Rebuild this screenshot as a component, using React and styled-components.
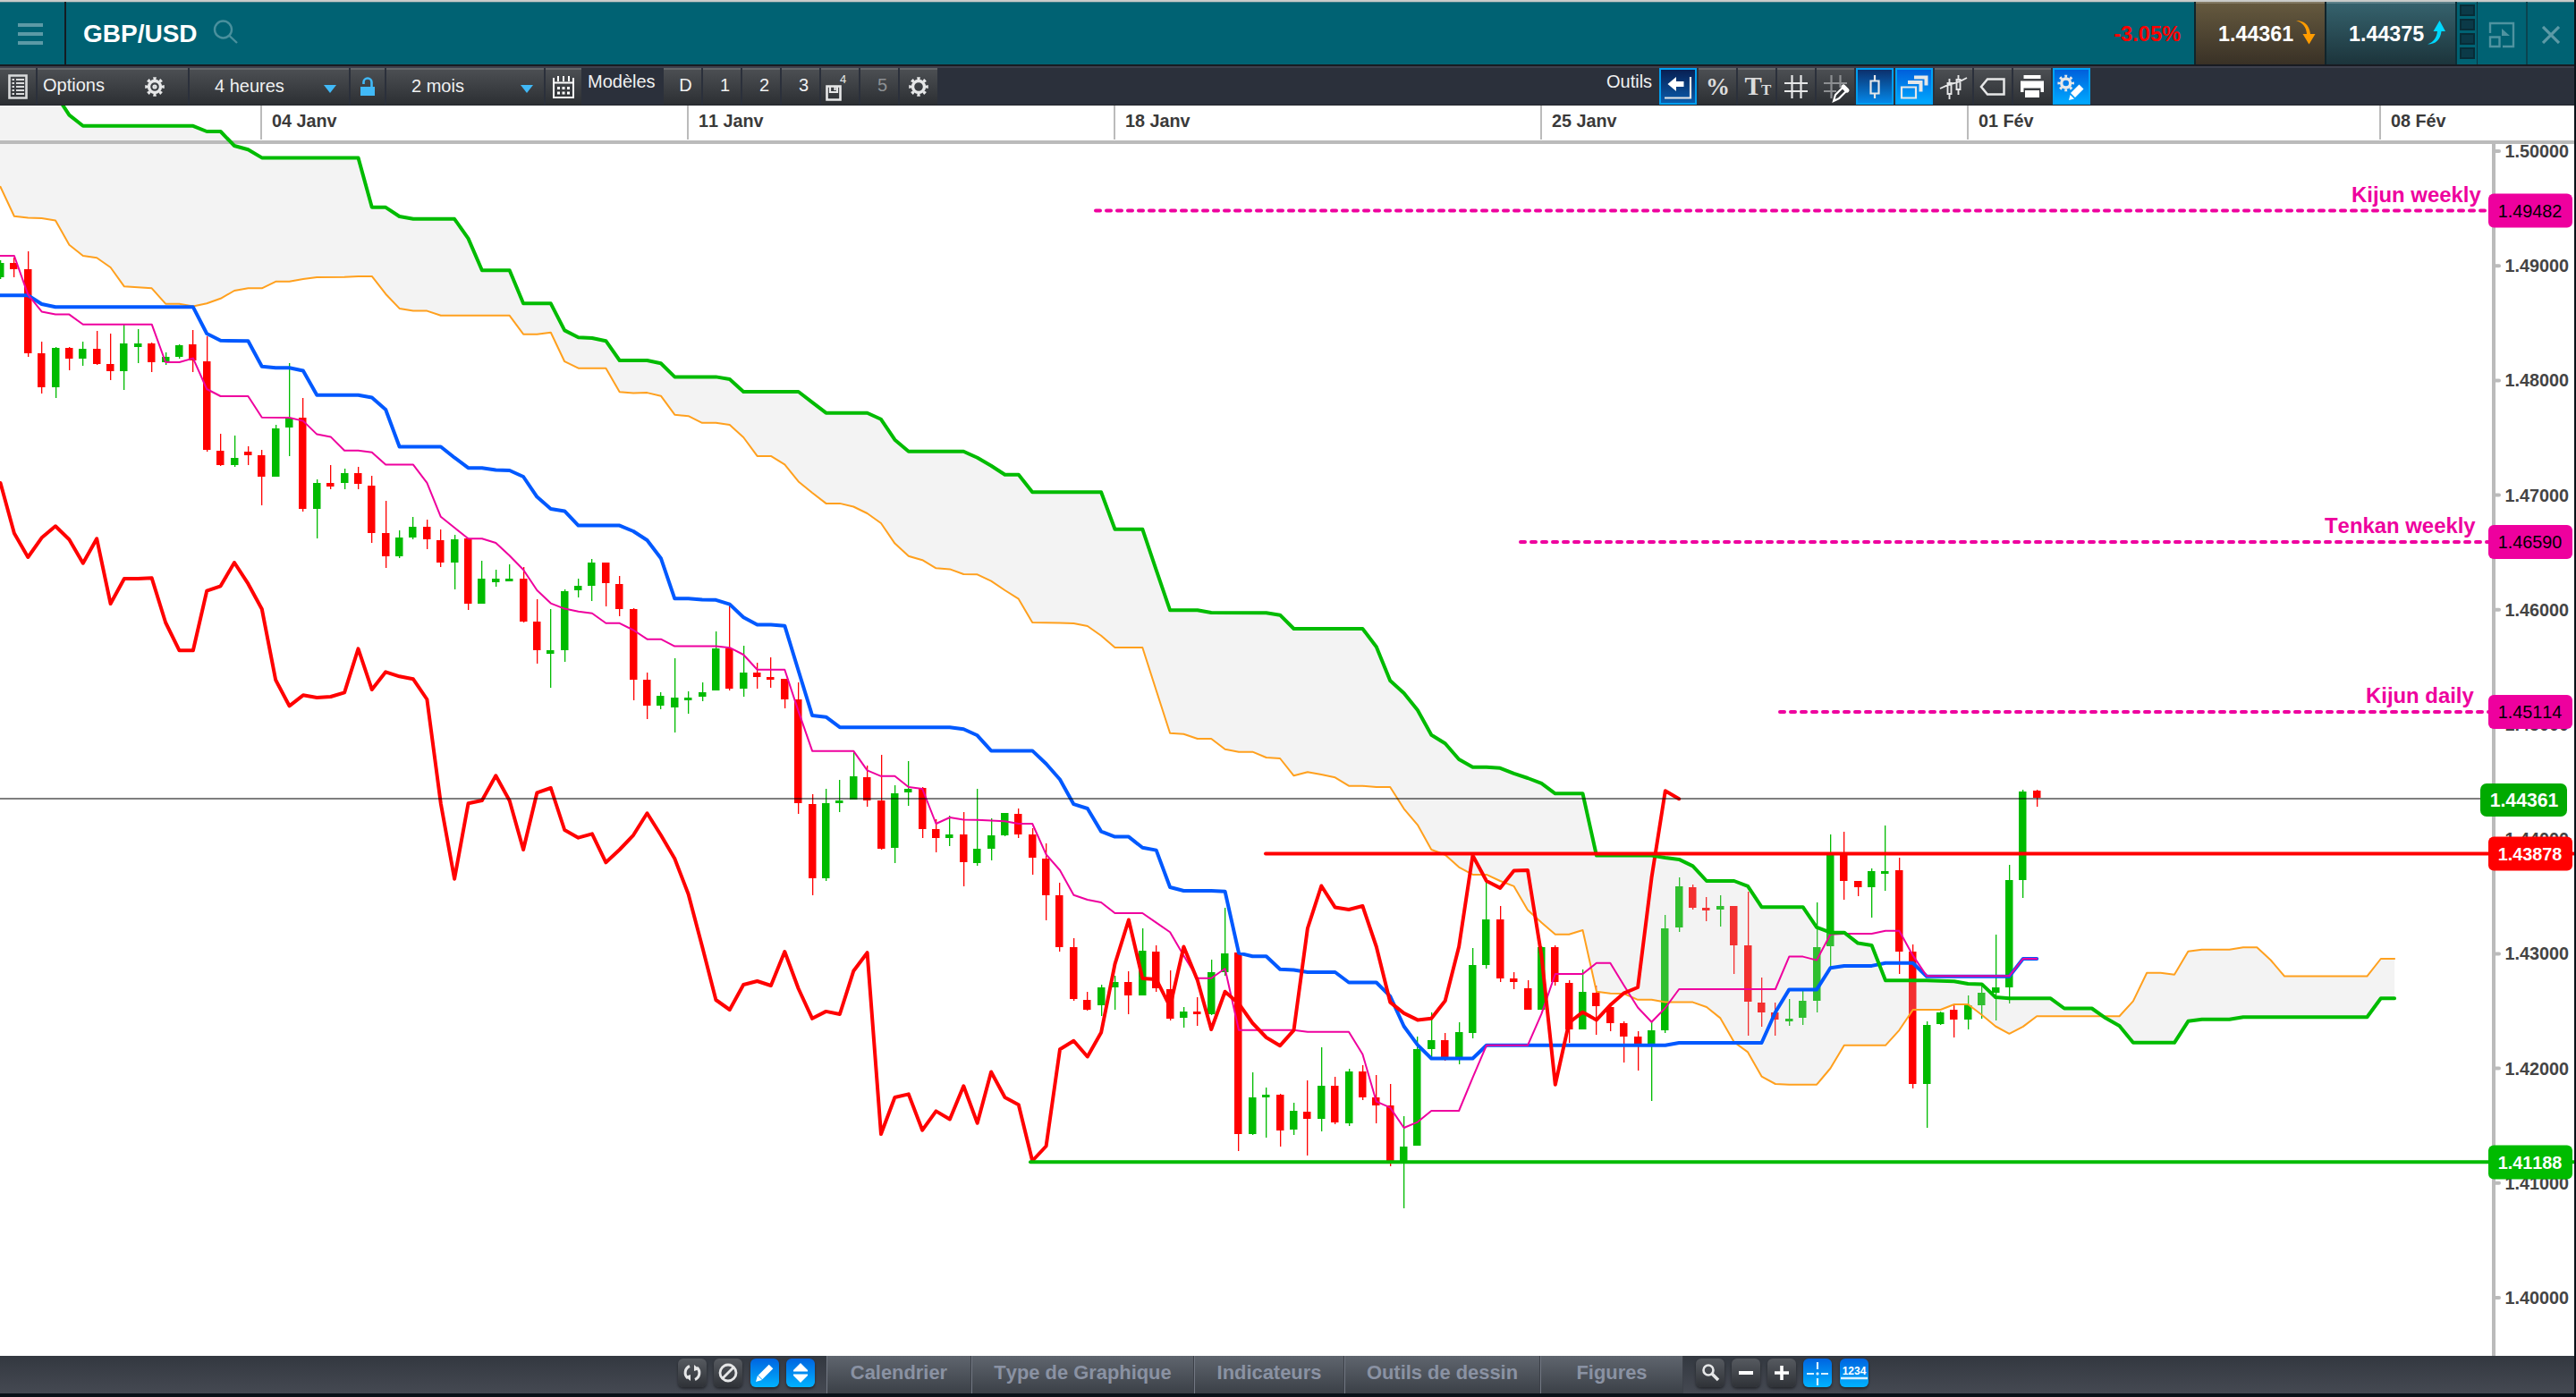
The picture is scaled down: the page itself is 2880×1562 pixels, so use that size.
import React from 'react'
import styled, { createGlobalStyle, css } from 'styled-components'

const GlobalStyle = createGlobalStyle`
  * {
    box-sizing: border-box;
  }

  body {
    margin: 0;
    background: #0a1118;
    font-family: 'Liberation Sans', Arial, sans-serif;
    font-kerning: none;
  }
`

const Window = styled.div`
  display: flex;
  flex-direction: column;
  width: 2878px;
  height: 1562px;
  overflow: hidden;
`

/* ---------- title bar ---------- */

const TitleBar = styled.header`
  display: flex;
  height: 72px;
  flex: none;
  color: #fff;
  background: #006273;
  border-top: 2px solid #c9cbc9;
  box-shadow: inset 0 1px 0 #3c7d88;
`

const MenuButton = styled.div`
  width: 74px;
  padding: 24px 0 0 20px;
  border-right: 2px solid #141c22;

  svg {
    display: block;
  }
`

const Symbol = styled.h1`
  margin: 0 17px 0 19px;
  font-size: 28px;
  font-weight: 700;
  line-height: 72px;
`

const SearchIcon = styled.svg`
  margin-top: 20px;
`

const Change = styled.div`
  margin-left: auto;
  margin-right: 15px;
  color: #f00;
  font-size: 23.6px;
  font-weight: 700;
  line-height: 72px;
`

const Quote = styled.div`
  display: flex;
  width: 146px;
  padding-left: 25px;
  font-size: 23.3px;
  font-weight: 700;
  line-height: 73px;
  background: ${({ $buy }) =>
    $buy ? 'linear-gradient(#36636e, #1c343b)' : 'linear-gradient(#665a3f, #393126)'};
  border-left: 2px solid #10242b;
  box-shadow: inset 0 2px 0 rgba(255, 255, 255, 0.2);

  svg {
    flex: none;
    margin: 20px 0 0 3px;
  }
`

const Meter = styled.div`
  display: flex;
  flex-direction: column;
  gap: 3px;
  width: 25px;
  padding: 3px 2px 0 3px;
  border-left: 2px solid #0b2f38;
  border-right: 1px solid #0b3540;
`

const MeterCell = styled.span`
  height: 13px;
  background: #0b3a48;
  border: 2px solid #082c37;
`

const WindowButton = styled.div`
  display: flex;
  align-items: center;
  justify-content: center;
  width: 54px;
  padding-top: 4px;
  border-left: ${({ $divided }) => ($divided ? '2px solid #0b4450' : '0')};
`

/* ---------- tool bar ---------- */

const ToolBar = styled.nav`
  display: flex;
  gap: 2px;
  height: 46px;
  flex: none;
  padding-top: 2px;
  background: #2b303b;
  border-top: 2px solid #181b22;
  border-bottom: 1px solid #23262c;
  box-shadow: inset 0 2px 0 #3d404c;
`

const toneStyles = {
  plain: css`
    background: linear-gradient(#4d5054, #2c2f33);
    box-shadow: inset 0 2px 0 #64676a;
  `,
  deep: css`
    background: linear-gradient(#081f52, #0a5cac);
    border: 2px solid #009ff0;
  `,
  mid: css`
    background: linear-gradient(#0c306c, #0487e8);
    border: 2px solid #009ff0;
  `,
  bright: css`
    background: linear-gradient(#005fdb, #00a8ff);
    border: 2px solid #00a2f4;
  `
}

const Tool = styled.div`
  display: flex;
  flex: none;
  align-items: center;
  justify-content: center;
  width: ${({ $width }) => $width || 42}px;
  color: ${({ $dim }) => ($dim ? '#8d9094' : '#f0f1f2')};
  font-size: 20px;
  ${({ $tone }) => toneStyles[$tone || 'plain']}

  svg {
    flex: none;
  }
`

const WideTool = styled(Tool)`
  justify-content: space-between;
  padding: ${({ $pad }) => $pad};
`

const PresetTool = styled(Tool)`
  padding: 0 0 3px 7px;
`

const ToolLabel = styled.span`
  width: ${({ $width }) => $width}px;
  padding: 4px 0 0 5px;
  margin-left: ${({ $push }) => $push || 0}px;
  color: #f0f1f2;
  font-size: 20px;
  line-height: 23px;
`

const Caret = styled.span`
  margin-top: 5px;
  border: 7px solid transparent;
  border-top: 9px solid #41b9f7;
  border-bottom: 0;
`

/* ---------- bottom bar ---------- */

const BottomBar = styled.footer`
  display: flex;
  height: 42px;
  flex: none;
  background: linear-gradient(#333840, #454952);
`

const IconGroup = styled.div`
  display: flex;
  gap: 8.3px;
  padding: 3px 0 0 ${({ $indent }) => $indent}px;
  width: ${({ $width }) => $width}px;
`

const RoundTool = styled.div`
  display: flex;
  flex: none;
  width: 32px;
  height: 32px;
  border-radius: 6px;
  box-shadow: 0 2px 3px rgba(0, 0, 0, 0.45);
  background: ${({ $on }) =>
    $on ? 'linear-gradient(#0064e0, #00b2ff)' : 'linear-gradient(#565a60, #2f3237)'};
`

const Tab = styled.div`
  flex: none;
  width: ${({ $width }) => $width}px;
  color: #8a92a3;
  font-size: 21.9px;
  font-weight: 700;
  line-height: 37px;
  text-align: center;
  background: linear-gradient(#5f656e, #3b4047);
  border-left: 1px solid #727883;
  border-right: 1px solid #3c4048;
`

const ChartArea = styled.main`
  height: 1398px;
  flex: none;
  background: #fff;

  svg {
    display: block;
  }
`

/* ---------- chart data ---------- */

const BAR_WIDTH = 15.383
const TICK = 0.3954

const UP = '#00bb00'
const DOWN = '#ff0000'
const PINK = '#ee009e'

// Bars are kept as tick offsets below the top of their block:
// direction, high, body top, body bottom, low
const blocks = [
  {
    from: 0,
    top: 110,
    bars: [
      ['u', 458, 465, 506, 512], ['d', 450, 465, 483, 507], ['d', 432, 483, 721, 731],
      ['d', 688, 722, 817, 834], ['u', 703, 706, 817, 848], ['d', 702, 706, 735, 768],
      ['u', 687, 708, 735, 755], ['d', 658, 708, 750, 754], ['d', 666, 752, 771, 797],
      ['u', 640, 693, 771, 824], ['u', 653, 694, 703, 748], ['d', 691, 693, 745, 775],
      ['u', 718, 731, 745, 754], ['u', 695, 697, 732, 737], ['d', 656, 696, 741, 775],
      ['d', 672, 743, 995, 999], ['d', 948, 997, 1038, 1040], ['u', 953, 1017, 1038, 1042],
      ['d', 984, 999, 1009, 1038], ['d', 993, 1009, 1069, 1150], ['u', 922, 933, 1069, 1069],
      ['u', 748, 903, 931, 1012], ['d', 846, 904, 1161, 1168], ['u', 1078, 1087, 1161, 1245],
      ['d', 1037, 1087, 1097, 1104], ['u', 1047, 1060, 1087, 1106], ['d', 1042, 1060, 1090, 1106],
      ['d', 1067, 1095, 1228, 1257], ['d', 1138, 1229, 1295, 1327], ['u', 1222, 1243, 1296, 1300],
      ['u', 1184, 1211, 1242, 1247], ['d', 1190, 1211, 1248, 1274], ['d', 1219, 1249, 1312, 1324],
      ['u', 1234, 1247, 1312, 1388], ['d', 1243, 1245, 1429, 1447], ['u', 1308, 1359, 1430, 1430],
      ['u', 1334, 1359, 1367, 1381], ['u', 1317, 1357, 1366, 1366], ['d', 1324, 1357, 1480, 1483]
    ]
  },
  {
    from: 39,
    top: 400,
    bars: [
      ['d', 682, 747, 827, 864], ['u', 710, 828, 836, 933], ['u', 655, 659, 827, 860],
      ['u', 624, 646, 657, 678], ['u', 570, 580, 646, 689], ['d', 580, 580, 637, 703],
      ['d', 617, 641, 710, 731], ['d', 708, 710, 910, 969], ['d', 889, 910, 984, 1021],
      ['u', 947, 955, 985, 993], ['u', 850, 962, 990, 1060], ['u', 944, 960, 969, 1007],
      ['u', 917, 947, 959, 972], ['u', 774, 823, 942, 942], ['d', 702, 823, 937, 942],
      ['u', 814, 890, 936, 959], ['d', 862, 890, 902, 936], ['d', 846, 902, 910, 934],
      ['d', 908, 909, 966, 991], ['d', 918, 966, 1260, 1290], ['d', 1234, 1262, 1472, 1520],
      ['u', 1220, 1260, 1471, 1480], ['u', 1193, 1252, 1260, 1286], ['u', 1115, 1184, 1250, 1250],
      ['d', 1154, 1186, 1251, 1270], ['d', 1122, 1252, 1389, 1391], ['u', 1209, 1231, 1387, 1430],
      ['u', 1140, 1218, 1229, 1266], ['d', 1214, 1216, 1334, 1359], ['d', 1304, 1334, 1357, 1399],
      ['u', 1296, 1348, 1357, 1381], ['d', 1285, 1349, 1427, 1495], ['u', 1218, 1389, 1430, 1436],
      ['u', 1302, 1351, 1389, 1421]
    ]
  },
  {
    from: 73,
    top: 760,
    bars: [
      ['u', 376, 378, 440, 442], ['d', 364, 379, 438, 448], ['d', 421, 438, 503, 552],
      ['d', 462, 505, 609, 680], ['d', 575, 610, 756, 770], ['d', 731, 756, 904, 909],
      ['d', 883, 905, 933, 936], ['u', 862, 870, 921, 952], ['u', 836, 856, 869, 932],
      ['d', 825, 856, 893, 946], ['u', 703, 767, 894, 894], ['d', 750, 768, 873, 882],
      ['d', 822, 875, 958, 964], ['u', 926, 938, 956, 984], ['d', 898, 938, 947, 980],
      ['u', 791, 826, 946, 949], ['u', 646, 773, 826, 837], ['d', 770, 772, 1285, 1333],
      ['u', 1110, 1181, 1285, 1287], ['u', 1154, 1173, 1182, 1296], ['d', 1170, 1173, 1274, 1320],
      ['u', 1196, 1220, 1273, 1287], ['d', 1132, 1221, 1243, 1345], ['u', 1040, 1149, 1243, 1276],
      ['d', 1123, 1148, 1252, 1258], ['u', 1099, 1109, 1254, 1261], ['d', 1090, 1109, 1180, 1188],
      ['d', 1119, 1181, 1203, 1255], ['d', 1143, 1203, 1361, 1376], ['u', 1233, 1319, 1364, 1495],
      ['u', 1010, 1045, 1318, 1318], ['u', 942, 1020, 1044, 1070], ['d', 1000, 1020, 1068, 1077],
      ['u', 968, 997, 1068, 1087], ['u', 758, 808, 1000, 1014], ['u', 575, 678, 807, 817],
      ['d', 640, 679, 844, 855], ['d', 826, 845, 854, 874], ['d', 851, 872, 932, 932],
      ['u', 753, 755, 932, 932], ['d', 750, 755, 856, 866], ['d', 850, 857, 989, 1027],
      ['u', 820, 883, 990, 990], ['d', 865, 885, 924, 1005], ['d', 915, 926, 971, 994],
      ['d', 966, 972, 1010, 1082], ['d', 994, 1009, 1033, 1104], ['u', 968, 991, 1030, 1190],
      ['u', 665, 702, 991, 999], ['u', 559, 584, 701, 713], ['d', 580, 587, 644, 650],
      ['d', 615, 644, 652, 683], ['u', 609, 641, 649, 698], ['d', 640, 641, 752, 832],
      ['d', 599, 752, 910, 1007], ['d', 842, 913, 941, 981], ['d', 914, 941, 961, 1007],
      ['u', 903, 959, 966, 978], ['u', 877, 909, 956, 975], ['u', 630, 755, 907, 942],
      ['u', 438, 494, 754, 812], ['d', 430, 494, 568, 621], ['d', 568, 569, 588, 613],
      ['u', 534, 541, 588, 674], ['u', 411, 540, 548, 597], ['d', 503, 539, 768, 831],
      ['d', 748, 770, 1142, 1157], ['u', 966, 975, 1142, 1267], ['u', 938, 941, 973, 975],
      ['d', 920, 933, 961, 1012], ['u', 892, 921, 961, 989], ['u', 866, 886, 921, 959],
      ['u', 722, 870, 886, 964], ['u', 524, 566, 869, 916], ['u', 310, 315, 566, 617],
      ['d', 312, 314, 335, 358]
    ]
  }
]

// Lines are [bar, y] pairs, flat stretches keep only their ends
const spanA = [
  [0, 208.9], [1, 241.7], [2, 243.6], [3, 244], [4, 246.4], [5, 273.7], [6, 286], [7, 288.3],
  [8, 299], [9, 320.3], [11, 322.3], [12, 339.7], [13, 339.7], [14, 342.5], [15, 339.3],
  [16, 333.8], [17, 325], [18, 322.3], [19, 322.3], [20, 314.8], [21, 314.8], [22, 312],
  [23, 310], [25, 309.8], [26, 308.9], [27, 308.9], [28, 328.7], [29, 344.9], [30, 347.6],
  [31, 347.6], [32, 352.8], [37, 352.8], [38, 373.7], [39, 373.7], [40, 371.8], [41, 404.2],
  [42, 411.7], [44, 411.7], [45, 438.2], [46, 439.4], [47, 439.1], [48, 442.7], [49, 463.7],
  [50, 465.2], [51, 472.8], [52, 472.8], [53, 475.1], [54, 489], [55, 509.9], [56, 509.9],
  [57, 519.4], [58, 538.4], [59, 551], [60, 562.9], [61, 562.9], [62, 566.5], [63, 574],
  [64, 585], [65, 607.6], [66, 621.8], [67, 626.2], [68, 635.3], [69, 636.4], [70, 642],
  [71, 642.3], [72, 649.7], [73, 660], [74, 669.7], [75, 696], [77, 696.5], [78, 697],
  [79, 700], [80, 710.7], [81, 724], [83, 724], [84, 772], [85, 819.7], [86, 820.7], [87, 826],
  [88, 826], [89, 837.7], [90, 840.7], [91, 840.7], [92, 847], [93, 848], [94, 867.3],
  [95, 863.3], [96, 866], [97, 869.3], [98, 878.7], [99, 878.7], [100, 880], [101, 880],
  [102, 904.3], [103, 922.3], [104, 950], [105, 955.7], [106, 969.6], [107, 977.9],
  [108, 977.9], [109, 985], [110, 990.9], [111, 1017.4], [112, 1031.6], [113, 1044.7],
  [114, 1044.7], [115, 1040], [116, 1108.7], [117, 1110.7], [118, 1111], [119, 1117.8],
  [120, 1117.8], [121, 1120.6], [123, 1120.6], [124, 1126], [125, 1138.4], [126, 1165.3],
  [127, 1176.4], [128, 1203.6], [129, 1212], [130, 1212.7], [132, 1212.7], [133, 1194.5],
  [134, 1168.8], [137, 1168.8], [138, 1151.8], [139, 1129], [141, 1129], [142, 1123],
  [143, 1123], [144, 1134.8], [145, 1147.5], [146, 1155.8], [147, 1147.9], [148, 1136.2],
  [154, 1136.2], [155, 1119.4], [156, 1087.8], [157, 1087.8], [158, 1089.8], [159, 1063.8],
  [160, 1061.7], [162, 1061.7], [163, 1059.2], [164, 1059.2], [165, 1073.5], [166, 1091.6],
  [172, 1091.6], [173, 1072], [174, 1072]
]

const spanB = [
  [-1, 60], [4, 105], [5, 128.6], [6, 140.8], [14, 140.8], [15, 147], [16, 147], [17, 163],
  [18, 167.3], [19, 176.4], [26, 176.4], [27, 231.8], [28, 231.8], [29, 242], [30, 244.8],
  [33, 244.8], [34, 266.6], [35, 302.2], [37, 302.2], [38, 339.3], [40, 339.3], [41, 369.4],
  [42, 377.3], [43, 378], [44, 381.2], [45, 403], [47, 403], [48, 406.3], [49, 421.4],
  [52, 421.4], [53, 424], [54, 438], [58, 438], [59, 449.8], [60, 461.7], [63, 461.7],
  [64, 468.8], [65, 491.7], [66, 504.8], [70, 504.8], [71, 511.8], [72, 520.7], [73, 530.7],
  [74, 530.7], [75, 550.3], [80, 550.3], [81, 591.7], [83, 591.7], [84, 637.3], [85, 682.3],
  [87, 682.3], [88, 685], [92, 685.3], [93, 687.7], [94, 703], [99, 703], [100, 723.3],
  [101, 761], [102, 775], [103, 794], [104, 821.7], [105, 831.2], [106, 849], [107, 857.7],
  [108, 857.7], [109, 858.8], [110, 864.8], [111, 870], [112, 875.9], [113, 887.3],
  [115, 887.3], [116, 956.5], [120, 956.5], [121, 958.9], [122, 960.9], [123, 968.4],
  [124, 985], [126, 985], [127, 990.9], [128, 1014.2], [131, 1014.2], [132, 1036.8],
  [133, 1042.7], [134, 1042.7], [135, 1054.6], [136, 1057], [137, 1096.3], [140, 1096.3],
  [142, 1097.3], [143, 1100], [144, 1100.4], [145, 1115], [146, 1116.3], [149, 1116.3],
  [150, 1127.5], [152, 1127.5], [153, 1138.3], [154, 1147], [155, 1165.8], [158, 1165.8],
  [159, 1141.8], [160, 1139.8], [162, 1139.8], [163, 1137.2], [172, 1137.2], [173, 1116.3],
  [174, 1116.3]
]

const kijun = [
  [0, 330.2], [2, 330.2], [3, 340], [4, 343.3], [14, 343.3], [15, 373], [16, 380.8],
  [18, 381.2], [19, 409.7], [20, 411.3], [21, 411.3], [22, 414.5], [23, 441.7], [26, 441.7],
  [27, 444.5], [28, 458], [29, 499.5], [32, 499.5], [33, 511.7], [34, 523.2], [35, 523.2],
  [36, 525.6], [37, 526], [38, 533], [39, 555.6], [40, 569], [41, 571.4], [42, 587.6],
  [45, 587.6], [46, 594], [47, 604], [48, 624.2], [49, 669.3], [50, 669.3], [51, 670.5],
  [52, 670.8], [53, 675.6], [54, 690.2], [55, 698.5], [56, 698.5], [57, 699.7], [58, 750],
  [59, 800], [60, 801.7], [61, 813.2], [69, 813.2], [70, 815.2], [71, 822.3], [72, 839.4],
  [75, 839.4], [76, 854], [77, 871.5], [78, 899.2], [79, 904], [80, 929.6], [81, 935.6],
  [82, 935.6], [83, 947.8], [84, 950.6], [85, 992], [86, 996], [88, 996], [89, 996.8],
  [90, 1065.6], [91, 1069.2], [92, 1069.2], [93, 1083.8], [94, 1084.6], [95, 1087],
  [97, 1087], [98, 1098.5], [100, 1098.5], [101, 1113.9], [102, 1147.5], [103, 1168.4],
  [104, 1183.5], [107, 1183.5], [108, 1168.8], [121, 1168.8], [122, 1166], [128, 1166],
  [129, 1131.7], [130, 1106.4], [132, 1106.4], [133, 1082.2], [134, 1079.9], [136, 1079.9],
  [137, 1076.7], [139, 1076.7], [140, 1091.7], [146, 1091.7], [147, 1072], [148, 1072]
]

const tenkan = [
  [0, 286], [1, 286], [2, 329.4], [3, 348.4], [4, 351.6], [5, 351.6], [6, 362.7], [11, 362.7],
  [12, 405], [13, 405], [14, 400.6], [15, 435], [16, 443], [18, 443], [19, 466.7], [21, 467],
  [22, 470.6], [23, 485.6], [24, 488.4], [25, 503.8], [26, 503.8], [27, 505.8], [28, 519.6],
  [30, 519.6], [31, 539.8], [32, 577.8], [33, 590], [34, 602.3], [35, 602.3], [36, 607],
  [37, 621.3], [38, 637], [39, 660], [40, 674.6], [41, 680.6], [42, 683.7], [43, 685.7],
  [44, 696.8], [45, 696.8], [46, 704.5], [47, 714.7], [48, 714.7], [49, 722.6], [52, 722.6],
  [53, 724.2], [54, 732], [55, 748.7], [57, 748.7], [58, 795.4], [59, 839.7], [62, 839.7],
  [63, 861.4], [64, 867.8], [65, 867.8], [66, 880], [67, 882], [68, 921], [69, 914],
  [70, 916.4], [71, 916.8], [72, 917.6], [73, 918.2], [74, 921], [75, 921], [76, 955.3],
  [77, 973], [78, 1000.8], [79, 1006], [80, 1009], [81, 1021], [83, 1021], [84, 1031.6],
  [85, 1042.3], [86, 1068.4], [87, 1093.7], [88, 1093.7], [89, 1083], [90, 1151.8],
  [94, 1151.8], [95, 1153.8], [98, 1153.8], [99, 1178.7], [100, 1231.7], [101, 1238.4],
  [102, 1261], [103, 1254.6], [104, 1242], [106, 1242], [107, 1204.8], [108, 1168.8],
  [111, 1168.8], [112, 1133.7], [113, 1089], [115, 1089], [116, 1076.7], [117, 1076.7],
  [118, 1102], [119, 1126.5], [120, 1142.7], [121, 1127], [122, 1106], [129, 1106],
  [130, 1069.6], [131, 1069.6], [132, 1073.6], [133, 1044.7], [134, 1043.9], [136, 1043.9],
  [137, 1040.7], [138, 1040.7], [139, 1068.4], [140, 1091.3], [146, 1091.3], [147, 1072],
  [148, 1072]
]

const chikou = [
  [0, 540], [1, 596.3], [2, 623], [3, 601.3], [4, 588.3], [5, 603.3], [6, 629.7], [7, 602.3],
  [8, 675], [9, 647], [10, 647], [11, 646.3], [12, 696], [13, 727.3], [14, 727.3],
  [15, 660.7], [16, 655.3], [17, 629], [18, 652.7], [19, 681], [20, 760.3], [21, 789.3],
  [22, 777.3], [23, 780], [24, 779], [25, 774.3], [26, 725.3], [27, 771], [28, 751.3],
  [29, 756.3], [30, 759.3], [31, 782], [32, 898.3], [33, 982.7], [34, 898.3], [35, 895],
  [36, 867.3], [37, 895.3], [38, 950], [39, 886.3], [40, 881], [41, 928], [42, 936.7],
  [43, 932.3], [44, 964.3], [45, 950], [46, 933.8], [47, 909.3], [48, 933.8], [49, 960],
  [50, 999.8], [51, 1058], [52, 1118], [53, 1129], [54, 1101], [55, 1097], [56, 1102],
  [57, 1064], [58, 1105.5], [59, 1138.8], [60, 1130.9], [61, 1134], [62, 1085.8],
  [63, 1065.2], [64, 1268], [65, 1227], [66, 1223.4], [67, 1263.7], [68, 1242.4],
  [69, 1251.5], [70, 1214.3], [71, 1255.8], [72, 1198.5], [73, 1227], [74, 1235.3],
  [75, 1298], [76, 1281.5], [77, 1173.2], [78, 1163.7], [79, 1181.5], [80, 1154.6],
  [81, 1077.9], [82, 1028.5], [83, 1094], [84, 1094.9], [85, 1125.7], [86, 1058.5],
  [87, 1096], [88, 1151], [89, 1108.7], [90, 1122.2], [91, 1144], [92, 1160], [93, 1169.2],
  [94, 1151.8], [95, 1038], [96, 990.5], [97, 1014.6], [98, 1017], [99, 1013], [100, 1058.5],
  [101, 1120.6], [102, 1132.9], [103, 1140.4], [104, 1138.8], [105, 1119], [106, 1058.5],
  [107, 956.5], [108, 985], [109, 992.9], [110, 973.5], [111, 973], [112, 1068.4],
  [113, 1212.7], [114, 1143.5], [115, 1131.7], [116, 1140.4], [117, 1123.8], [118, 1110.3],
  [119, 1104], [120, 981.4], [121, 884.2], [122, 893.2]
]

const dates = [
  [292, '04 Janv'],
  [769, '11 Janv'],
  [1246, '18 Janv'],
  [1723, '25 Janv'],
  [2200, '01 Fév'],
  [2661, '08 Fév']
]

const prices = [1.5, 1.49, 1.48, 1.47, 1.46, 1.45, 1.44, 1.43, 1.42, 1.41, 1.4]

const targets = [
  { name: 'Kijun weekly', price: '1.49482', x: 1225, y: 235.5, labelX: 2629 },
  { name: 'Tenkan weekly', price: '1.46590', x: 1700, y: 606, labelX: 2599 },
  { name: 'Kijun daily', price: '1.45114', x: 1990, y: 796, labelX: 2645 }
]

const barX = i => 0.5 + i * BAR_WIDTH
const priceY = p => 1451 - (p - 1.4) * 12820
const toPoints = line => line.map(([i, y]) => `${barX(i).toFixed(1)},${y}`).join(' ')

function Candles() {
  return blocks.map(({ from, top, bars }) =>
    bars.map(([dir, ...levels], n) => {
      const x = Math.floor(barX(from + n))
      const [high, open, close, low] = levels.map(v => Math.round(top + v * TICK))
      return (
        <g key={from + n} fill={dir === 'u' ? UP : DOWN}>
          <rect x={x} y={high} width="1.3" height={low - high} />
          <rect x={x - 4} y={open} width="8.5" height={Math.max(close - open, 3)} />
        </g>
      )
    })
  )
}

function PriceTag({ y, fill, color = '#fff', weight = 700, children }) {
  return (
    <g>
      <rect x="2782" y={y - 19} width="94" height="38" rx="6" fill={fill} />
      <text x="2828.5" y={y + 7} fontSize="19.8" fontWeight={weight} fill={color} textAnchor="middle">
        {children}
      </text>
    </g>
  )
}

function Chart() {
  return (
    <svg width="2878" height="1398" viewBox="0 118 2878 1398">
      <Candles />
      <polygon
        points={`${toPoints(spanA)} ${toPoints([...spanB].reverse())}`}
        fill="#ccc"
        fillOpacity="0.235"
      />

      {dates.map(([x, label]) => (
        <g key={label}>
          <rect x={x - 1} y="118" width="2" height="38" fill="#bbb" />
          <text x={x + 12} y="142" fontSize="19.8" fontWeight="700" fill="#3a3a3a">
            {label}
          </text>
        </g>
      ))}
      <rect x="0" y="157" width="2878" height="4" fill="#bbb" />
      <rect x="2786" y="161" width="4" height="1355" fill="#bbb" />
      {prices.map(p => (
        <g key={p}>
          <rect x="2788" y={priceY(p) - 2} width="8" height="4" rx="2" fill="#bbb" />
          <text x="2800.5" y={priceY(p) + 7} fontSize="19.8" fontWeight="700" fill="#444">
            {p.toFixed(5)}
          </text>
        </g>
      ))}

      <g fill="none" strokeLinejoin="round" strokeLinecap="round">
        <polyline points={toPoints(spanA)} stroke="#ffa01e" strokeWidth="2" />
        <polyline points={toPoints(kijun)} stroke="#0059ff" strokeWidth="4" />
        <polyline points={toPoints(tenkan)} stroke={PINK} strokeWidth="2" />
        <polyline points={toPoints(chikou)} stroke={DOWN} strokeWidth="4" />
        <polyline points={toPoints(spanB)} stroke={UP} strokeWidth="4" />
        <path d="M1415 954.6H2878" stroke={DOWN} strokeWidth="4" />
        <path d="M1152 1299.2H2878" stroke={UP} strokeWidth="4" />
        {targets.map(t => (
          <path
            key={t.name}
            d={`M${t.x} ${t.y}H2784`}
            stroke={PINK}
            strokeWidth="4"
            strokeDasharray="5 7"
          />
        ))}
      </g>
      <rect x="0" y="892" width="2774" height="2" fillOpacity="0.5" />

      {targets.map(t => (
        <g key={t.name}>
          <text x={t.labelX} y={t.y - 10} fontSize="23.9" fontWeight="700" fill={PINK}>
            {t.name}
          </text>
          <PriceTag y={t.y} fill={PINK} color="#000" weight={400}>
            {t.price}
          </PriceTag>
        </g>
      ))}
      <PriceTag y={954.6} fill={DOWN}>
        1.43878
      </PriceTag>
      <PriceTag y={1299.5} fill={UP}>
        1.41188
      </PriceTag>
      <rect x="2773" y="876" width="97" height="37" rx="7" fill="#00aa00" />
      <text x="2822" y="902" fontSize="21.2" fontWeight="700" fill="#fff" textAnchor="middle">
        1.44361
      </text>
    </svg>
  )
}

/* ---------- icons ---------- */

const Glyph = ({ size = 42, children }) => (
  <svg
    width={size}
    height={size}
    viewBox={`0 0 ${size} ${size}`}
    fill="none"
    stroke="#e6e7e8"
    strokeWidth="2.2"
  >
    {children}
  </svg>
)

const Gear = ({ cx = 21, cy = 21, r = 6.5 }) => (
  <g stroke="#e6e7e8" fill="none">
    <circle cx={cx} cy={cy} r={r} strokeWidth="3.4" />
    <circle
      cx={cx}
      cy={cy}
      r={r + 2.8}
      strokeWidth="3"
      pathLength="80"
      strokeDasharray="4.6 5.4"
      strokeDashoffset="2.3"
    />
  </g>
)

const tools = [
  {
    id: 'back',
    tone: 'deep',
    icon: (
      <>
        <path d="M6 33.5H35V10" />
        <path d="M9.5 18 19 10v5h8.5v6H19v5z" fill="#fff" stroke="none" />
      </>
    )
  },
  {
    id: 'percent',
    icon: (
      <text x="21.5" y="30" fontFamily="Liberation Serif, serif" fontSize="27" fontWeight="700" textAnchor="middle" fill="#dcdcdc" stroke="none">
        %
      </text>
    )
  },
  {
    id: 'text',
    icon: (
      <g fontFamily="Liberation Serif, serif" fontWeight="700" fill="#dcdcdc" stroke="none">
        <text x="7.5" y="30" fontSize="29">T</text>
        <text x="26" y="30" fontSize="17">T</text>
      </g>
    )
  },
  { id: 'grid', icon: <path d="M16.5 8v26M26.5 8v26M8 17h26M8 26h26" /> },
  {
    id: 'grid-edit',
    icon: (
      <>
        <path d="M16.5 8v26M26.5 8v14M8 17h26M8 26h14" stroke="#8d8f92" />
        <path d="M19 37l2-7 8-8 4 4-8 8z" fill="#303336" stroke="#fff" />
        <path d="M30 21l4 4" stroke="#fff" strokeWidth="5" strokeLinecap="round" />
      </>
    )
  },
  { id: 'candle', tone: 'mid', icon: <path d="M16.5 14.5h9v14h-9zM21 8v6.5M21 28.5V34" /> },
  {
    id: 'cascade',
    tone: 'bright',
    icon: (
      <>
        <path d="M7 21.500h16v12H7z" />
        <path d="M14 16h14.5v10.500M21 10.500h13.500v9" strokeWidth="4" />
      </>
    )
  },
  {
    id: 'compare',
    icon: <path d="M14.5 17h4v12h-4zM16.5 12v5M16.5 29v6M24.5 13h4v11h-4zM26.5 8v5M26.5 24v6M6 23l9-4 13-4 8-4" strokeWidth="1.9" />
  },
  { id: 'tag', icon: <path d="M15 12.500h18.500v17H15L8 21z" strokeWidth="2.5" /> },
  {
    id: 'print',
    icon: (
      <g fill="#fff" stroke="none">
        <path d="M11.500 8h19v4h-19zM8 14.500h26V27h-3.500v-4.500h-19V27H8z" />
        <path d="M13 25h16v8H13z" />
      </g>
    )
  },
  {
    id: 'draw-settings',
    tone: 'bright',
    icon: (
      <>
        <Gear cx={14.7} cy={17} r={5} />
        <path d="M22.500 30.500L32 21" stroke="#fff" strokeWidth="7" />
        <path d="M18 36l1.500-6 4.500 4.500z" fill="#fff" stroke="none" />
      </>
    )
  }
]

export default function App() {
  return (
    <Window>
      <GlobalStyle />
      <TitleBar>
        <MenuButton>
          <svg width="28" height="24" fill="#5c9aa6">
            <path d="M0 0h28v4H0zM0 10h28v4H0zM0 20h28v4H0z" />
          </svg>
        </MenuButton>
        <Symbol>GBP/USD</Symbol>
        <SearchIcon width="28" height="28" fill="none" stroke="#4a909d" strokeWidth="2.4">
          <circle cx="11.5" cy="11" r="9.5" />
          <path d="M18.5 18l8.500 8" />
        </SearchIcon>
        <Change>-3.05%</Change>
        <Quote>
          1.44361
          <svg width="24" height="30" fill="#ff9c00">
            <path d="M0 1c9 0 15 5 16 15h5.500l-7 11.500L7.500 16H12C11.500 8 7 3 0 1z" />
          </svg>
        </Quote>
        <Quote $buy>
          1.44375
          <svg width="24" height="30" fill="#00d8ff">
            <path d="M1 27.500c9 0 14.500-5 15.500-14.500H21L14.500 1 7.500 13H12C11.500 20 7 25.500 1 27.500z" />
          </svg>
        </Quote>
        <Meter>
          <MeterCell />
          <MeterCell />
          <MeterCell />
          <MeterCell />
        </Meter>
        <WindowButton>
          <svg width="30" height="30" fill="none" stroke="#4f93a0" strokeWidth="2.4">
            <path d="M2 13V2h26v26H16M2 17.500h10.500V28H2z" />
            <path d="M15 8v8h9z" fill="#4f93a0" stroke="none" />
          </svg>
        </WindowButton>
        <WindowButton $divided>
          <svg width="20" height="20" stroke="#5c9aa6" strokeWidth="3.2">
            <path d="M1 1l18 18M19 1L1 19" />
          </svg>
        </WindowButton>
      </TitleBar>

      <ToolBar>
        <Tool $width={40}>
          <svg width="22" height="28" fill="none" stroke="#d9dadb" strokeWidth="2.6">
            <path d="M1.500 1.500h19v25h-19z" />
            <path d="M4.500 6h2.500M9 6h9M4.500 10h2.500M9 10h9M4.500 14h2.500M9 14h9M4.500 18h2.500M9 18h9M4.500 22h2.500M9 22h9" strokeWidth="2" />
          </svg>
        </Tool>
        <WideTool $width={168} $pad="0 16px 3px 6px">
          Options
          <Glyph>
            <Gear cy={23} />
            <circle cx="21" cy="23" r="1.5" />
          </Glyph>
        </WideTool>
        <WideTool $width={178} $pad="0 14px 0 28px">
          4 heures
          <Caret />
        </WideTool>
        <Tool $width={38}>
          <svg width="18" height="22" fill="none" stroke="#41b9f7" strokeWidth="2.6">
            <path d="M4.500 8V6a4.500 4.500 0 0 1 9 0v6" />
            <path d="M2 12h14v8H2z" fill="#41b9f7" strokeWidth="2" />
          </svg>
        </Tool>
        <WideTool $width={176} $pad="0 12px 0 28px">
          2 mois
          <Caret />
        </WideTool>
        <Tool $width={40}>
          <svg width="26" height="28" fill="none" stroke="#fff" strokeWidth="2">
            <path d="M2 4v22h22V4M2 9.500h22M7 2v6M13 2v6M19 2v6" />
            <path d="M6 15.500h3M11.500 15.500h3M17 15.500h3M6 21h3M11.500 21h3M17 21h3" strokeWidth="3" />
          </svg>
        </Tool>
        <ToolLabel $width={88}>Modèles</ToolLabel>
        <PresetTool>D</PresetTool>
        <PresetTool>1</PresetTool>
        <PresetTool>2</PresetTool>
        <PresetTool>3</PresetTool>
        <Tool>
          <Glyph>
            <path d="M6.500 20.500h15v15h-15z" strokeWidth="2.6" />
            <path d="M10 21v6h8v-6M15.500 21v4" />
            <text x="21" y="17" fontSize="13" fill="#e6e7e8" stroke="none">
              4
            </text>
          </Glyph>
        </Tool>
        <PresetTool $dim>5</PresetTool>
        <Tool>
          <Glyph>
            <Gear />
          </Glyph>
        </Tool>
        <ToolLabel $width={62} $push={741}>
          Outils
        </ToolLabel>
        {tools.map(({ id, tone, icon }) => (
          <Tool key={id} $tone={tone}>
            <Glyph>{icon}</Glyph>
          </Tool>
        ))}
      </ToolBar>

      <ChartArea>
        <Chart />
      </ChartArea>

      <BottomBar>
        <IconGroup $width={924} $indent={758}>
          <RoundTool>
            <Glyph size={32}>
              <path d="M13 8.500a8 8 0 0 0-2 13.500M19 23.500a8 8 0 0 0 2-13.500" strokeWidth="3" />
              <path d="M8 20l6 5v-7zM24 12l-6-5v7z" fill="#e6e7e8" stroke="none" />
            </Glyph>
          </RoundTool>
          <RoundTool>
            <Glyph size={32}>
              <circle cx="16" cy="16" r="9" strokeWidth="2.8" />
              <path d="M10 22L22 10" strokeWidth="2.8" />
            </Glyph>
          </RoundTool>
          <RoundTool $on>
            <Glyph size={32}>
              <path d="M11 21L23 9" stroke="#fff" strokeWidth="6.5" />
              <path d="M6 26l2-7 5 5z" fill="#fff" stroke="none" />
            </Glyph>
          </RoundTool>
          <RoundTool $on>
            <Glyph size={32}>
              <path d="M16 5l8 8v1.500H8V13zM16 27l8-8v-1.500H8V19z" fill="#fff" stroke="none" />
            </Glyph>
          </RoundTool>
        </IconGroup>
        <Tab $width={162}>Calendrier</Tab>
        <Tab $width={249}>Type de Graphique</Tab>
        <Tab $width={168}>Indicateurs</Tab>
        <Tab $width={219}>Outils de dessin</Tab>
        <Tab $width={160}>Figures</Tab>
        <IconGroup $indent={13.5}>
          <RoundTool>
            <Glyph size={32}>
              <circle cx="14" cy="13" r="5.5" strokeWidth="2.6" />
              <path d="M18 17l7 7" strokeWidth="3.5" />
            </Glyph>
          </RoundTool>
          <RoundTool>
            <Glyph size={32}>
              <path d="M8 16h16" stroke="#fff" strokeWidth="4" />
            </Glyph>
          </RoundTool>
          <RoundTool>
            <Glyph size={32}>
              <path d="M8 16h16M16 8v16" stroke="#fff" strokeWidth="3.6" />
            </Glyph>
          </RoundTool>
          <RoundTool $on>
            <Glyph size={32}>
              <path d="M4 17h8M20 17h8M16 4v8M16 22v8M16 15.500v3M14.500 17h3" stroke="#d8f1ff" />
            </Glyph>
          </RoundTool>
          <RoundTool $on>
            <Glyph size={32}>
              <text x="16" y="18" fontSize="12" fontWeight="700" textAnchor="middle" fill="#fff" stroke="none">
                1234
              </text>
              <path d="M1 22h30" stroke="#d8f1ff" strokeWidth="2.5" />
            </Glyph>
          </RoundTool>
        </IconGroup>
      </BottomBar>
    </Window>
  )
}
